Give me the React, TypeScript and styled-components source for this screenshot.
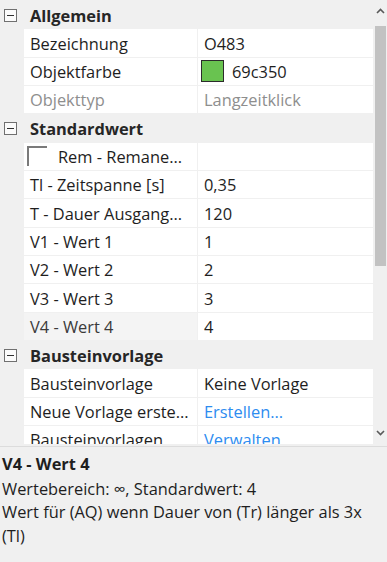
import React from "react";
import styled, { createGlobalStyle } from "styled-components";

const GlobalStyle = createGlobalStyle`
  html, body {
    margin: 0;
    padding: 0;
    background: #f0f0f0;
  }
  body {
    font-family: "Open Sans", "Noto Sans", sans-serif;
    color: #1e1e1e;
  }
`;

const ROW_H = 28.35;

const Window = styled.div`
  width: 387px;
  height: 562px;
  background: #f0f0f0;
  display: flex;
  flex-direction: column;
  overflow: hidden;
`;

const GridArea = styled.div`
  height: 447px;
  box-sizing: border-box;
  padding-bottom: 2px;
  flex: none;
  display: flex;
  flex-direction: row;
  border-bottom: 1px solid #dcdcdc;
`;

const RowList = styled.div`
  width: 373px;
  padding-top: 1px;
  overflow: hidden;
`;

const CategoryRow = styled.div`
  height: ${ROW_H}px;
  display: flex;
  align-items: center;
  background: #f0f0f0;
  font-weight: 700;
  font-size: 16.4px;
  color: #262626;
`;

const Toggle = styled.span`
  width: 23px;
  display: flex;
  justify-content: center;
  padding-right: 3px;
  box-sizing: border-box;
`;

const MinusBox = styled.span`
  width: 11px;
  height: 11px;
  border: 1px solid #707070;
  position: relative;
  background: #fbfbfb;
  &::after {
    content: "";
    position: absolute;
    left: 2px;
    right: 2px;
    top: 5px;
    height: 1px;
    background: #303030;
  }
`;

const CategoryLabel = styled.span`
  padding-left: 7px;
`;

const PropRow = styled.div`
  height: ${ROW_H}px;
  display: grid;
  grid-template-columns: 23px 173px 176px;
  column-gap: 1px;
  box-sizing: border-box;
  border-bottom: 1px solid #f0f0f0;
  font-size: 16.4px;
`;

const Margin = styled.div`
  background: #f0f0f0;
`;

const Cell = styled.div<{ $selected?: boolean; $muted?: boolean; $link?: boolean }>`
  background: ${(p) => (p.$selected ? "#f4f4f4" : "#ffffff")};
  color: ${(p) => (p.$link ? "#2d8cf0" : p.$muted ? "#8e8e8e" : p.$selected ? "#3a3a3a" : "#1e1e1e")};
  display: flex;
  align-items: center;
  gap: 8px;
  padding-left: 6px;
  white-space: nowrap;
  overflow: hidden;
`;

const Swatch = styled.span<{ $color: string }>`
  width: 21px;
  height: 20px;
  background: ${(p) => p.$color};
  border: 1px solid #2b2b2b;
  flex: none;
  margin-left: -3px;
`;

const CheckMark = styled.span`
  width: 20px;
  height: 20px;
  flex: none;
  border-top: 2px solid #7a7a7a;
  border-left: 2px solid #7a7a7a;
  box-sizing: border-box;
  margin: 0 3px 0 -3px;
`;

const Scrollbar = styled.div`
  width: 14px;
  margin-left: auto;
  background: #f0f0f0;
  display: flex;
  flex-direction: column;
  align-items: center;
`;

const Arrow = styled.div`
  height: 22px;
  display: flex;
  align-items: center;
  justify-content: center;
  flex: none;
`;

const Thumb = styled.div`
  width: 11px;
  height: 240px;
  background: #c2c2c2;
  margin-top: 4px;
`;

const Spacer = styled.div`
  flex: 1;
`;

const Description = styled.div`
  padding: 5px 6px 0 2px;
  font-size: 16.4px;
  line-height: 23.5px;
  color: #1e1e1e;
`;

const DescTitle = styled.div`
  font-weight: 700;
  margin-bottom: 1px;
`;

type Prop = {
  name: string;
  value?: string;
  swatch?: string;
  check?: boolean;
  muted?: boolean;
  link?: boolean;
  selected?: boolean;
};

type Category = { title: string; props: Prop[] };

const data: Category[] = [
  {
    title: "Allgemein",
    props: [
      { name: "Bezeichnung", value: "O483" },
      { name: "Objektfarbe", value: "69c350", swatch: "#69c350" },
      { name: "Objekttyp", value: "Langzeitklick", muted: true },
    ],
  },
  {
    title: "Standardwert",
    props: [
      { name: "Rem - Remane...", check: true },
      { name: "Tl - Zeitspanne [s]", value: "0,35" },
      { name: "T - Dauer Ausgang...", value: "120" },
      { name: "V1 - Wert 1", value: "1" },
      { name: "V2 - Wert 2", value: "2" },
      { name: "V3 - Wert 3", value: "3" },
      { name: "V4 - Wert 4", value: "4", selected: true },
    ],
  },
  {
    title: "Bausteinvorlage",
    props: [
      { name: "Bausteinvorlage", value: "Keine Vorlage" },
      { name: "Neue Vorlage erste...", value: "Erstellen...", link: true },
      { name: "Bausteinvorlagen", value: "Verwalten...", link: true },
    ],
  },
];

const Chevron = ({ up }: { up?: boolean }) => (
  <svg width="9" height="6" viewBox="0 0 9 6">
    <polyline
      points={up ? "1,5 4.5,1.5 8,5" : "1,1 4.5,4.5 8,1"}
      fill="none"
      stroke="#5a5a5a"
      strokeWidth="1.6"
    />
  </svg>
);

export default function App() {
  return (
    <Window>
      <GlobalStyle />
      <GridArea>
        <RowList>
          {data.map((cat) => (
            <React.Fragment key={cat.title}>
              <CategoryRow>
                <Toggle>
                  <MinusBox />
                </Toggle>
                <CategoryLabel>{cat.title}</CategoryLabel>
              </CategoryRow>
              {cat.props.map((p) => (
                <PropRow key={p.name}>
                  <Margin />
                  <Cell $selected={p.selected} $muted={p.muted}>
                    {p.check && <CheckMark />}
                    {p.name}
                  </Cell>
                  <Cell $muted={p.muted} $link={p.link}>
                    {p.swatch && <Swatch $color={p.swatch} />}
                    {p.value}
                  </Cell>
                </PropRow>
              ))}
            </React.Fragment>
          ))}
        </RowList>
        <Scrollbar>
          <Arrow>
            <Chevron up />
          </Arrow>
          <Thumb />
          <Spacer />
          <Arrow>
            <Chevron />
          </Arrow>
        </Scrollbar>
      </GridArea>
      <Description>
        <DescTitle>V4 - Wert 4</DescTitle>
        <div>Wertebereich: ∞, Standardwert: 4</div>
        <div>Wert für (AQ) wenn Dauer von (Tr) länger als 3x (Tl)</div>
      </Description>
    </Window>
  );
}
